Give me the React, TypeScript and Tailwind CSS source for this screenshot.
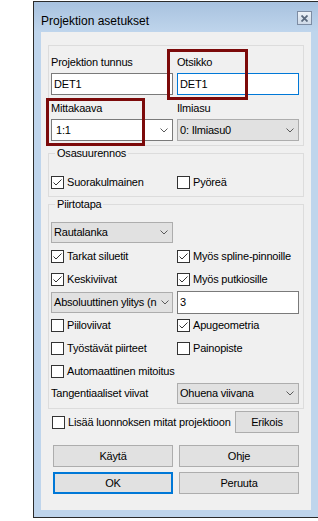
import React from 'react';

function Chevron() {
  return (
    <svg width="8" height="5" viewBox="0 0 8 5" className="block">
      <path d="M0.5 0.5 L4 4 L7.5 0.5" fill="none" stroke="#5a5a5a" strokeWidth="1" />
    </svg>
  );
}

function Check({ label, checked }: { label: string; checked?: boolean }) {
  return (
    <div className="flex items-center h-[23px] gap-[3px]">
      <span className="w-[13px] h-[13px] border border-[#333333] bg-white flex items-center justify-center shrink-0">
        {checked && (
          <svg width="11" height="11" viewBox="0 0 11 11" className="block">
            <path d="M1.5 5.5 L4 8 L9.5 2.5" fill="none" stroke="#333333" strokeWidth="1" />
          </svg>
        )}
      </span>
      <span className="whitespace-nowrap">{label}</span>
    </div>
  );
}

function Combo({ value, white, h = 'h-[21px]' }: { value: string; white?: boolean; h?: string }) {
  return (
    <div
      className={
        'flex items-center border ' +
        h +
        (white ? ' bg-white border-[#7a7a7a] pl-[4px]' : ' bg-[#e1e1e1] border-[#adadad] pl-[2px]')
      }
    >
      <span className="flex-1 whitespace-nowrap">{value}</span>
      <span className="w-[17px] flex justify-center shrink-0">
        <Chevron />
      </span>
    </div>
  );
}

function TextBox({ value, focused, h = 'h-[22px]' }: { value: string; focused?: boolean; h?: string }) {
  return (
    <div
      className={
        'flex items-center bg-white border pl-[2px] ' + h + (focused ? ' border-[#0078d7]' : ' border-[#7a7a7a]')
      }
    >
      {value}
    </div>
  );
}

function Btn({ label, isDefault, w = 'w-[120px]' }: { label: string; isDefault?: boolean; w?: string }) {
  return (
    <div
      className={
        'h-[22px] flex items-center justify-center bg-[#e1e1e1] ' +
        w +
        (isDefault ? ' border-2 border-[#0078d7]' : ' border border-[#adadad]')
      }
    >
      {label}
    </div>
  );
}

export default function App() {
  return (
    <div className="w-[318px] h-[521px] bg-white overflow-hidden font-['Liberation_Sans',Arial,sans-serif] text-black">
      <div className="ml-[33px] mt-[1px] w-[285px] h-[517px] border-l border-t border-b border-[#2b2b2b] bg-[#bfd5ec] flex flex-col">
        {/* title bar */}
        <div className="h-[30px] flex items-start justify-between pl-[7px] pr-[6px] bg-[linear-gradient(to_bottom,#a8c2df,#bfd5ec)]">
          <span className="mt-[12px] text-[12px] leading-[14px]">Projektion asetukset</span>
          <div className="mt-[9px] w-[15px] h-[14px] border border-[#7d8ca3] bg-[linear-gradient(to_bottom,#edf2f8,#cfdae8)] flex items-center justify-center">
            <svg width="7" height="7" viewBox="0 0 7 7" className="block">
              <path d="M0.5 0.5 L6.5 6.5 M6.5 0.5 L0.5 6.5" stroke="#5b6a7e" strokeWidth="1.8" />
            </svg>
          </div>
        </div>

        {/* client area */}
        <div className="relative mx-[7px] h-[478px] bg-[#f0f0f0] flex flex-col text-[11px] leading-[13px] tracking-[-0.2px]">
          {/* group 1 */}
          <div className="mt-[13px] ml-[7px] w-[256px] h-[101px] border border-[#dcdcdc] px-[2px] pt-[10px]">
            <div className="grid grid-cols-[122px_122px] gap-x-[4px]">
              <span className="h-[13px]">Projektion tunnus</span>
              <span className="h-[13px]">Otsikko</span>
              <div className="mt-[4px]">
                <TextBox value="DET1" />
              </div>
              <div className="mt-[4px]">
                <TextBox value="DET1" focused />
              </div>
              <span className="mt-[7px] h-[13px]">Mittakaava</span>
              <span className="mt-[7px] h-[13px]">Ilmiasu</span>
              <div className="mt-[4px]">
                <Combo value="1:1" white h="h-[22px]" />
              </div>
              <div className="mt-[4px]">
                <Combo value="0: Ilmiasu0" h="h-[22px]" />
              </div>
            </div>
          </div>

          {/* Osasuurennos */}
          <div className="relative mt-[7px] ml-[7px] w-[256px] h-[44px] border border-[#dcdcdc] px-[2px] pt-[17px]">
            <span className="absolute -top-[7px] left-[6px] px-[2px] bg-[#f0f0f0]">Osasuurennos</span>
            <div className="grid grid-cols-[122px_122px] gap-x-[4px]">
              <Check label="Suorakulmainen" checked />
              <Check label="Pyöreä" />
            </div>
          </div>

          {/* Piirtotapa */}
          <div className="relative mt-[7px] ml-[7px] w-[256px] h-[205px] border border-[#dcdcdc] px-[2px] pt-[17px]">
            <span className="absolute -top-[7px] left-[6px] px-[2px] bg-[#f0f0f0]">Piirtotapa</span>
            <div className="grid grid-cols-[122px_122px] gap-x-[4px]">
              <Combo value="Rautalanka" />
              <div />
            </div>
            <div className="mt-[2px] grid grid-cols-[122px_122px] gap-x-[4px]">
              <Check label="Tarkat siluetit" checked />
              <Check label="Myös spline-pinnoille" checked />
              <Check label="Keskiviivat" checked />
              <Check label="Myös putkiosille" checked />
              <div className="h-[23px] flex items-center">
                <div className="w-full">
                  <Combo value="Absoluuttinen ylitys (n" />
                </div>
              </div>
              <TextBox value="3" h="h-[23px]" />
              <Check label="Piiloviivat" />
              <Check label="Apugeometria" checked />
              <Check label="Työstävät piirteet" />
              <Check label="Painopiste" />
              <Check label="Automaattinen mitoitus" />
              <div />
              <div className="h-[21px] flex items-center">Tangentiaaliset viivat</div>
              <Combo value="Ohuena viivana" />
            </div>
          </div>

          {/* Lisää row */}
          <div className="mt-[2px] h-[22px] pl-[11px] pr-[12px] flex items-center">
            <Check label="Lisää luonnoksen mitat projektioon" />
            <div className="ml-auto">
              <Btn label="Erikois" w="w-[64px]" />
            </div>
          </div>

          {/* buttons */}
          <div className="mt-[12px] pl-[12px] flex gap-[6px]">
            <Btn label="Käytä" />
            <Btn label="Ohje" />
          </div>
          <div className="mt-[5px] pl-[12px] flex gap-[6px]">
            <Btn label="OK" isDefault />
            <Btn label="Peruuta" />
          </div>

          {/* annotation boxes */}
          <div className="absolute left-[126px] top-[17px] w-[81px] h-[51px] border-[3px] border-[#7c0a0a]" />
          <div className="absolute left-[5px] top-[66px] w-[99px] h-[48px] border-[3px] border-[#7c0a0a]" />
        </div>
      </div>
    </div>
  );
}
